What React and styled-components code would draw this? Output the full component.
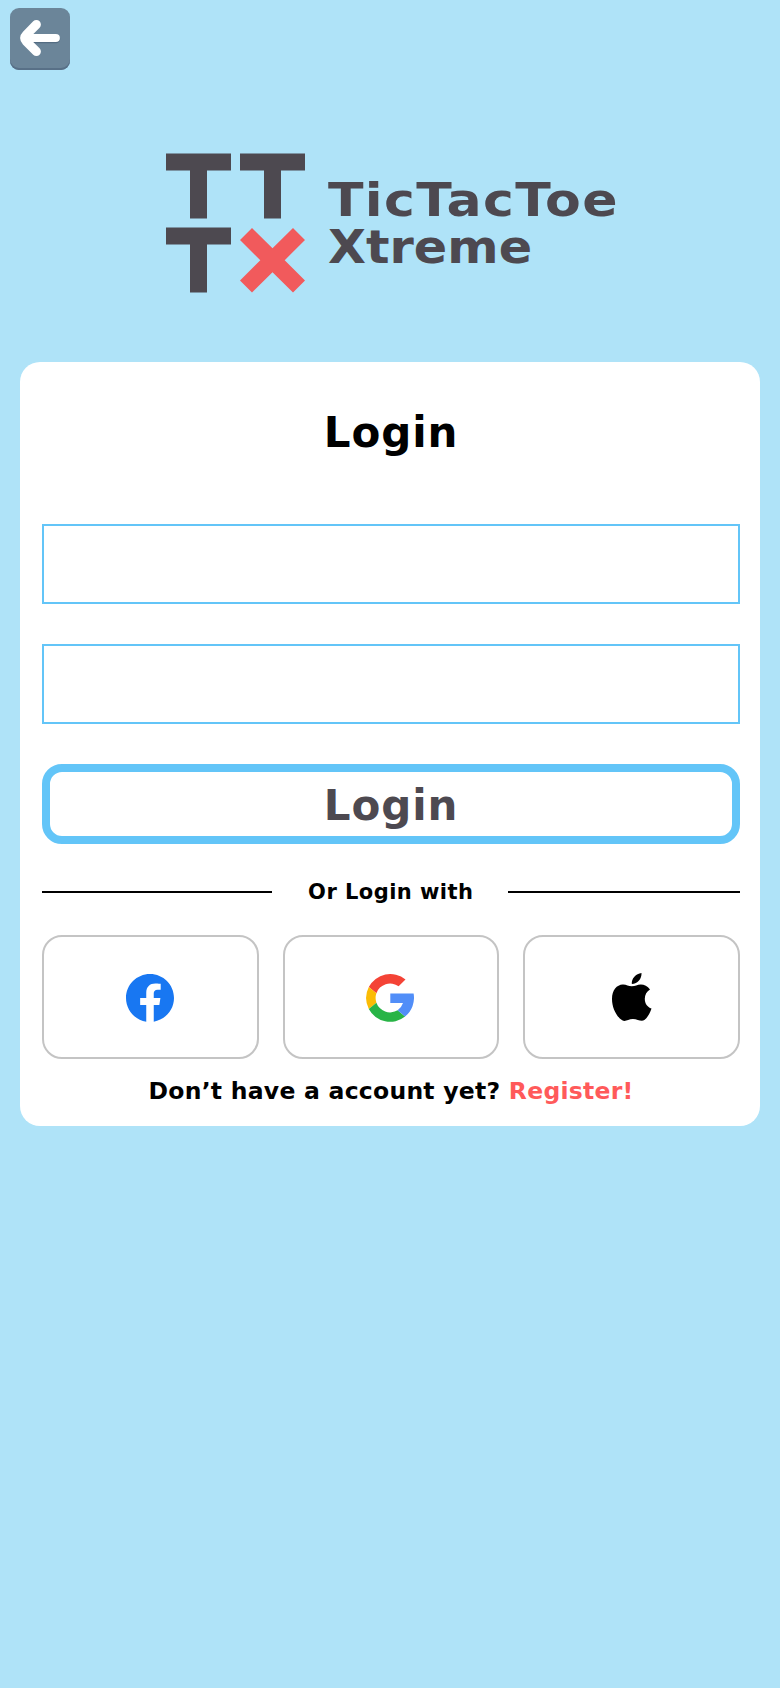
import React from "react";
import styled, { createGlobalStyle } from "styled-components";

const GlobalStyle = createGlobalStyle`
  * { box-sizing: border-box; }
  body {
    margin: 0;
    background: #afe3f8;
    font-family: "DejaVu Sans", Verdana, sans-serif;
    font-weight: 700;
  }
  button, input { font: inherit; margin: 0; }
`;

const Screen = styled.main`
  min-height: 1688px;
  padding: 8px 20px 0;
  display: flex;
  flex-direction: column;
`;

const BackButton = styled.button`
  width: 60px;
  height: 62px;
  margin-left: -10px;
  padding: 0;
  border: 0;
  border-radius: 9px;
  background: #6b8599;
  box-shadow: inset 0 -2px 0 #587087;
  svg { display: block; }
`;

const Brand = styled.header`
  display: flex;
  gap: 22px;
  margin: 83px 0 0 146px;
  height: 140px;
`;

const BrandName = styled.h1`
  margin: 24px 0 0;
  color: #4d4950;
  font-size: 46.5px;
  line-height: 47px;
  font-weight: 700;
  white-space: nowrap;
`;

const Word = styled.span`
  display: block;
  letter-spacing: ${(p) => p.$tracking}px;
  transform: scaleX(${(p) => p.$stretch});
  transform-origin: left center;
`;

const Card = styled.section`
  height: 764px;
  margin-top: 69px;
  padding: 0 20px 0 22px;
  border-radius: 20px;
  background: #fff;
  display: flex;
  flex-direction: column;
`;

const Title = styled.h2`
  margin: 46px 0 66px;
  height: 50px;
  font-size: 42px;
  line-height: 50px;
  letter-spacing: 0.9px;
  text-align: center;
  color: #000;
`;

const Form = styled.form`
  display: flex;
  flex-direction: column;
  gap: 40px;
`;

const Field = styled.input`
  height: 80px;
  padding: 0 20px;
  border: 2px solid #63c5f8;
  border-radius: 0;
  background: #fff;
  font-size: 28px;
  outline: none;
`;

const SubmitButton = styled.button`
  height: 80px;
  padding: 3px 0 0;
  border: 8px solid #63c5f8;
  border-radius: 20px;
  background: #fff;
  color: #4d4950;
  font-size: 42px;
  line-height: 50px;
  letter-spacing: 0.9px;
`;

const Divider = styled.div`
  display: grid;
  grid-template-columns: 229.5px 1fr 232px;
  align-items: center;
  height: 40px;
  margin-top: 28px;
  font-size: 21px;
  line-height: 40px;
  text-align: center;
  white-space: nowrap;
`;

const Rule = styled.span`
  height: 2px;
  background: #000;
`;

const DividerLabel = styled.span`
  letter-spacing: 0.45px;
  padding-left: 2px;
`;

const SocialRow = styled.div`
  display: grid;
  grid-template-columns: repeat(3, 1fr);
  gap: 24px;
  margin-top: 23px;
`;

const SocialButton = styled.button`
  height: 124px;
  padding: ${(p) => p.$inset || "2px 0 0"};
  border: 2px solid #c4c4c4;
  border-radius: 20px;
  background: #fff;
  display: flex;
  align-items: center;
  justify-content: center;
`;

const SignUp = styled.p`
  margin: 16px 0 0;
  font-size: 23.5px;
  line-height: 32px;
  text-align: center;
  white-space: nowrap;
  letter-spacing: 0.25px;
`;

const RegisterLink = styled.a`
  color: #ff5a5a;
`;

const BackArrow = () => (
  <svg width="60" height="62" viewBox="0 0 60 62" fill="none" stroke="#fff" strokeLinecap="round" strokeLinejoin="round">
    <path d="M17 31H46" stroke="#536c82" strokeWidth="8.5" />
    <path d="M16 30H45.8" strokeWidth="8.2" />
    <path d="M26.4 16.5L16.2 26.8Q13 30 16.2 33.3L26.4 43.5" strokeWidth="9" />
  </svg>
);

const LogoMark = () => (
  <svg width="140" height="140" viewBox="0 0 140 140" fill="#4d4950">
    <path d="M0 .5H65V17.5H41V65.5H24V17.5H0Z" />
    <path d="M74 .5H139V17.5H115V65.5H98V17.5H74Z" />
    <path d="M0 74.5H65V91.5H41V139.5H24V91.5H0Z" />
    <path fill="#f15a5c" d="M86 75L106.5 95.3L127 75L139 87L118.7 107.2L139 127.5L127 139.6L106.5 119.2L86 139.6L74 127.5L94.3 107.2L74 87Z" />
  </svg>
);

const FacebookIcon = () => (
  <svg width="48" height="48" viewBox="8 8 496 496">
    <path fill="#1877f2" d="M504 256C504 119 393 8 256 8S8 119 8 256c0 123.78 90.69 226.38 209.25 245V327.69h-63V256h63v-54.64c0-62.15 37-96.48 93.67-96.48 27.14 0 55.52 4.84 55.52 4.84v61h-31.28c-30.8 0-40.41 19.12-40.41 38.73V256h68.78l-11 71.69h-57.78V501C413.31 479.62 504 379.78 504 256z" />
  </svg>
);

const GoogleIcon = () => (
  <svg width="48" height="48" viewBox="0 0 48 48">
    <path fill="#f44336" d="M2.8 13.1A24 24 0 0 1 39.5 5.6L32.6 12.2A14.5 14.5 0 0 0 10.4 19.3Z" />
    <path fill="#fbbc05" d="M2.8 13.1L10.4 19.3A14.5 14.5 0 0 0 10.4 28.7L2.8 34.9A24 24 0 0 1 2.8 13.1Z" />
    <path fill="#28b446" d="M2.8 34.9L10.4 28.7A14.5 14.5 0 0 0 31.6 36.3L39.1 42.5A24 24 0 0 1 2.8 34.9Z" />
    <path fill="#518ef8" d="M24.3 19.5H47.6A24 24 0 0 1 39.1 42.5L31.6 36.3A14.5 14.5 0 0 0 37 29H24.3Z" />
  </svg>
);

const AppleIcon = () => (
  <svg width="40" height="48" viewBox="0 0 40 48" fill="#000">
    <path d="M29.5 0C29.9 5.6 25.6 11 19.8 11C19.2 5.7 24 .6 29.5 0Z" />
    <path d="M10.7 11.5C14.3 11.3 16.3 13.3 19.8 13.3C23.2 13.3 25.2 11.4 28.8 11.4C32.3 11.4 35.6 13.1 38 16.4C34.7 18.5 32.7 21.7 32.8 26C32.9 30.8 35.3 33.9 39.5 35.6C37.9 40.5 35.5 44.5 32.4 47C29.1 49.2 25.8 46 20.9 46C16 46 13.7 49.2 10.2 47.3C4.1 43.3 0 34.5 0 26C0 17 4.8 11.8 10.7 11.5Z" />
  </svg>
);

export default function App() {
  return (
    <>
      <GlobalStyle />
      <Screen>
        <BackButton aria-label="Back"><BackArrow /></BackButton>
        <Brand>
          <LogoMark />
          <BrandName>
            <Word $tracking={1.2} $stretch={1.12}>TicTacToe</Word>
            <Word $tracking={0} $stretch={1.06}>Xtreme</Word>
          </BrandName>
        </Brand>
        <Card>
          <Title>Login</Title>
          <Form onSubmit={(e) => e.preventDefault()}>
            <Field type="text" aria-label="Username" />
            <Field type="password" aria-label="Password" />
            <SubmitButton type="submit">Login</SubmitButton>
          </Form>
          <Divider>
            <Rule />
            <DividerLabel>Or Login with</DividerLabel>
            <Rule />
          </Divider>
          <SocialRow>
            <SocialButton aria-label="Facebook"><FacebookIcon /></SocialButton>
            <SocialButton aria-label="Google" $inset="2px 2px 0 0"><GoogleIcon /></SocialButton>
            <SocialButton aria-label="Apple" $inset="0"><AppleIcon /></SocialButton>
          </SocialRow>
          <SignUp>
            Don’t have a account yet? <RegisterLink>Register!</RegisterLink>
          </SignUp>
        </Card>
      </Screen>
    </>
  );
}
